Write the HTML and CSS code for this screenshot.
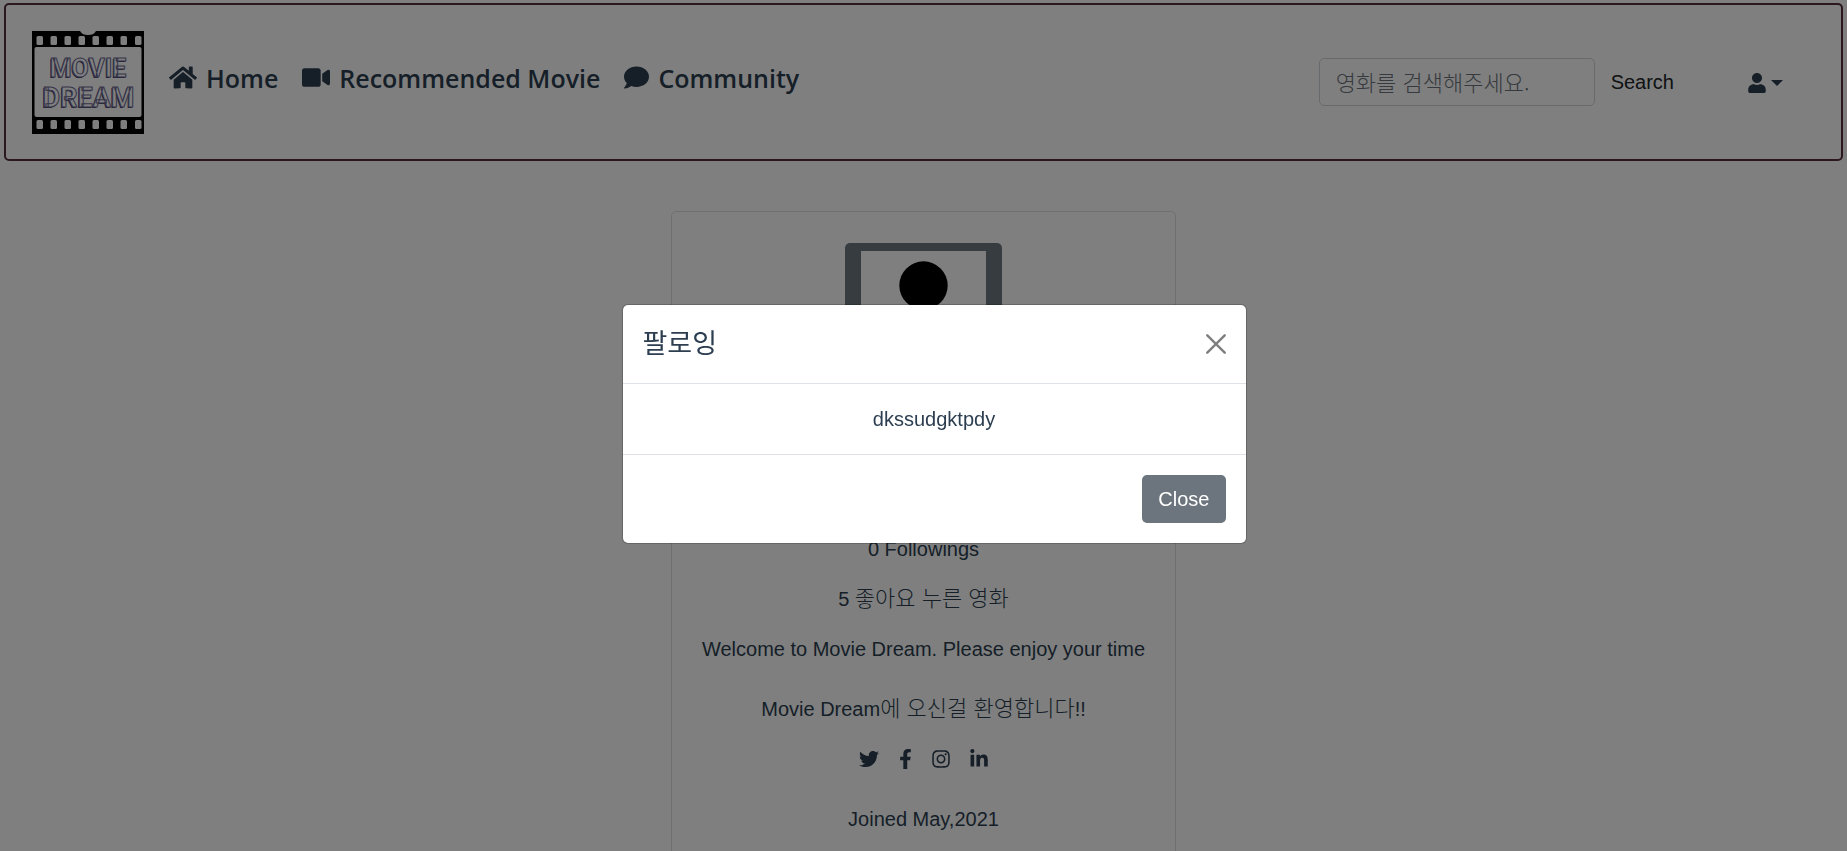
FILE: index.html
```html
<!DOCTYPE html>
<html lang="ko">
<head>
<meta charset="utf-8">
<meta name="viewport" content="width=device-width, initial-scale=1">
<title>Movie Dream</title>
<link rel="stylesheet" href="styles.css">
</head>
<body>
<header class="navbar">
  <a class="brand" href="#" aria-label="Movie Dream">
    <svg class="brand-logo" viewBox="0 0 112 103" aria-hidden="true">
      <path fill="#000" d="M0 0h48c2 3 4 4 8 4s6-1 8-4h48v103H0z"/>
      <rect x="2.500" y="16" width="107" height="70" rx="2" fill="#fff"/>
      <g fill="#fff">
        <rect x="4.500" y="5" width="6.500" height="9" rx="1.500"/><rect x="18.500" y="5" width="6.500" height="9" rx="1.500"/><rect x="32.500" y="5" width="6.500" height="9" rx="1.500"/><rect x="46.500" y="5" width="6.500" height="9" rx="1.500"/><rect x="60.500" y="5" width="6.500" height="9" rx="1.500"/><rect x="74.500" y="5" width="6.500" height="9" rx="1.500"/><rect x="88.500" y="5" width="6.500" height="9" rx="1.500"/><rect x="103" y="5" width="6.500" height="9" rx="1.500"/>
        <rect x="4.500" y="89" width="6.500" height="9" rx="1.500"/><rect x="18.500" y="89" width="6.500" height="9" rx="1.500"/><rect x="32.500" y="89" width="6.500" height="9" rx="1.500"/><rect x="46.500" y="89" width="6.500" height="9" rx="1.500"/><rect x="60.500" y="89" width="6.500" height="9" rx="1.500"/><rect x="74.500" y="89" width="6.500" height="9" rx="1.500"/><rect x="88.500" y="89" width="6.500" height="9" rx="1.500"/><rect x="103" y="89" width="6.500" height="9" rx="1.500"/>
      </g>
      <g class="logo-shadow"><text x="55" y="47" font-size="25">MOVIE</text><text x="55.500" y="76.500" font-size="27">DREAM</text></g>
      <g class="logo-face"><text x="56" y="46" font-size="25">MOVIE</text><text x="56.500" y="75.500" font-size="27">DREAM</text></g>
    </svg>
  </a>
  <nav class="nav">
    <a class="nav-link" href="#"><svg class="fa" width="28" height="25" viewBox="0 0 576 512" aria-hidden="true"><path d="M280.370 148.260L96 300.110V464a16 16 0 0 0 16 16l112.060-.290a16 16 0 0 0 15.920-16V368a16 16 0 0 1 16-16h64a16 16 0 0 1 16 16v95.640a16 16 0 0 0 16 16.050L464 480a16 16 0 0 0 16-16V300L295.670 148.260a12.190 12.190 0 0 0-15.300 0zM571.600 251.470L488 182.560V44.050a12 12 0 0 0-12-12h-56a12 12 0 0 0-12 12v72.610L318.470 43a48 48 0 0 0-61 0L4.340 251.470a12 12 0 0 0-1.600 16.900l25.500 31A12 12 0 0 0 45.150 301l235.220-193.740a12.190 12.190 0 0 1 15.300 0L530.900 301a12 12 0 0 0 16.900-1.600l25.500-31a12 12 0 0 0-1.700-16.930z"/></svg>Home</a>
    <a class="nav-link" href="#"><svg class="fa" width="28" height="25" viewBox="0 0 576 512" aria-hidden="true"><path d="M336.200 64H47.800C21.400 64 0 85.400 0 111.800v288.400C0 426.600 21.400 448 47.800 448h288.400c26.400 0 47.800-21.400 47.800-47.800V111.800c0-26.400-21.400-47.800-47.800-47.800zm189.400 37.700L416 177.300v157.400l109.600 75.500c21.200 14.600 50.400-.300 50.400-25.800V127.500c0-25.400-29.100-40.400-50.400-25.800z"/></svg>Recommended Movie</a>
    <a class="nav-link" href="#"><svg class="fa" width="25" height="25" viewBox="0 0 512 512" aria-hidden="true"><path d="M256 32C114.600 32 0 125.100 0 240c0 49.600 21.400 95 57 130.700C44.500 421.100 2.700 466 2.200 466.500c-2.200 2.300-2.800 5.700-1.500 8.700S4.800 480 8 480c66.300 0 116-31.800 140.600-51.400 32.700 12.300 69 19.400 107.400 19.400 141.400 0 256-93.100 256-208S397.400 32 256 32z"/></svg>Community</a>
  </nav>
  <form class="search">
    <input class="search-input" type="search" placeholder="영화를 검색해주세요." aria-label="영화 검색">
    <button class="search-button" type="button">Search</button>
  </form>
  <button class="user-menu" type="button" aria-label="User menu" aria-haspopup="true">
    <svg class="fa" width="18" height="20" viewBox="0 0 448 512" aria-hidden="true"><path d="M224 256c70.700 0 128-57.300 128-128S294.700 0 224 0 96 57.300 96 128s57.300 128 128 128zm89.600 32h-16.700c-22.200 10.200-46.900 16-72.900 16s-50.600-5.800-72.900-16h-16.700C60.200 288 0 348.200 0 422.400V464c0 26.500 21.500 48 48 48h352c26.500 0 48-21.500 48-48v-41.600c0-74.200-60.200-134.400-134.400-134.400z"/></svg>
    <span class="caret"></span>
  </button>
</header>

<main class="page">
  <section class="card">
    <svg class="avatar" viewBox="0 0 157 157" role="img" aria-label="Profile picture">
      <rect width="157" height="157" rx="5" fill="#6c7880"/>
      <rect x="16" y="8" width="125" height="141" fill="#fff"/>
      <circle cx="78.500" cy="42.500" r="24.200"/>
      <path d="M34 136c0-36 16-58 44.500-58S123 100 123 136z"/>
    </svg>
    <p class="stat">0 Followings</p>
    <p class="stat">5 <span class="ko">좋아요 누른 영화</span></p>
    <p class="welcome">Welcome to Movie Dream. Please enjoy your time</p>
    <p class="stat">Movie Dream<span class="ko">에 오신걸 환영합니다</span>!!</p>
    <div class="social">
      <a href="#" aria-label="Twitter"><svg class="fa" width="20" height="20" viewBox="0 0 512 512"><path d="M459.370 151.716c.325 4.548.325 9.097.325 13.645 0 138.720-105.583 298.558-298.558 298.558-59.452 0-114.680-17.219-161.137-47.106 8.447.974 16.568 1.299 25.340 1.299 49.055 0 94.213-16.568 130.274-44.832-46.132-.975-84.792-31.188-98.112-72.772 6.498.974 12.995 1.624 19.818 1.624 9.421 0 18.843-1.300 27.614-3.573-48.081-9.747-84.143-51.980-84.143-102.985v-1.299c13.969 7.797 30.214 12.670 47.431 13.319-28.264-18.843-46.781-51.005-46.781-87.391 0-19.492 5.197-37.360 14.294-52.954 51.655 63.675 129.300 105.258 216.365 109.807-1.624-7.797-2.599-15.918-2.599-24.040 0-57.828 46.782-104.934 104.934-104.934 30.213 0 57.502 12.670 76.670 33.137 23.715-4.548 46.456-13.320 66.599-25.340-7.798 24.366-24.366 44.833-46.132 57.827 21.117-2.273 41.584-8.122 60.426-16.243-14.292 20.791-32.161 39.308-52.628 54.253z"/></svg></a>
      <a href="#" aria-label="Facebook"><svg class="fa" width="13" height="20" viewBox="0 0 320 512"><path d="M279.140 288l14.220-92.660h-88.910v-60.130c0-25.350 12.420-50.060 52.240-50.060h40.420V6.260S260.430 0 225.360 0c-73.220 0-121.080 44.380-121.080 124.720v70.620H22.890V288h81.390v224h100.170V288z"/></svg></a>
      <a href="#" aria-label="Instagram"><svg class="fa" width="18" height="20" viewBox="0 0 448 512"><path d="M224.100 141c-63.600 0-114.900 51.300-114.900 114.900s51.300 114.900 114.900 114.900S339 319.500 339 255.900 287.700 141 224.100 141zm0 189.600c-41.100 0-74.700-33.500-74.700-74.700s33.500-74.700 74.700-74.700 74.700 33.500 74.700 74.700-33.600 74.700-74.700 74.700zm146.400-194.300c0 14.900-12 26.800-26.800 26.800-14.900 0-26.800-12-26.800-26.800s12-26.800 26.800-26.800 26.800 12 26.800 26.800zm76.100 27.200c-1.700-35.900-9.900-67.700-36.200-93.900-26.200-26.200-58-34.400-93.900-36.200-37-2.100-147.900-2.100-184.900 0-35.800 1.700-67.600 9.900-93.900 36.100s-34.400 58-36.200 93.900c-2.100 37-2.100 147.900 0 184.900 1.700 35.900 9.900 67.700 36.200 93.900s58 34.400 93.900 36.200c37 2.100 147.900 2.100 184.900 0 35.900-1.700 67.700-9.900 93.900-36.200 26.200-26.200 34.400-58 36.200-93.900 2.100-37 2.100-147.800 0-184.800zM398.800 388c-7.800 19.600-22.900 34.700-42.600 42.600-29.500 11.700-99.500 9-132.100 9s-102.700 2.600-132.100-9c-19.600-7.800-34.700-22.900-42.600-42.600-11.700-29.500-9-99.500-9-132.100s-2.600-102.700 9-132.100c7.800-19.600 22.900-34.700 42.600-42.600 29.500-11.700 99.500-9 132.100-9s102.700-2.600 132.100 9c19.600 7.800 34.700 22.900 42.600 42.600 11.700 29.500 9 99.500 9 132.100s2.700 102.700-9 132.100z"/></svg></a>
      <a href="#" aria-label="LinkedIn"><svg class="fa" width="18" height="20" viewBox="0 0 448 512"><path d="M100.280 448H7.400V148.900h92.880zM53.790 108.100C24.090 108.100 0 83.500 0 53.800a53.790 53.790 0 0 1 107.580 0c0 29.700-24.100 54.300-53.790 54.300zM447.900 448h-92.680V302.400c0-34.700-.700-79.200-48.290-79.200-48.290 0-55.690 37.700-55.690 76.700V448h-92.780V148.900h89.080v40.800h1.300c12.400-23.500 42.690-48.300 87.880-48.300 94 0 111.280 61.900 111.280 142.300V448z"/></svg></a>
    </div>
    <p class="joined">Joined May,2021</p>
  </section>
</main>

<div class="backdrop">
  <div class="modal" role="dialog" aria-modal="true" aria-labelledby="modal-title">
    <div class="modal-header">
      <h2 class="modal-title" id="modal-title">팔로잉</h2>
      <button class="modal-x" type="button" aria-label="Close dialog">
        <svg width="20" height="20" viewBox="0 0 20 20" aria-hidden="true"><path d="M1.300 1.300l17.400 17.400M18.700 1.300L1.300 18.700" fill="none" stroke="currentColor" stroke-width="2.400" stroke-linecap="round"/></svg>
      </button>
    </div>
    <div class="modal-body">dkssudgktpdy</div>
    <div class="modal-footer"><button class="close-button" type="button">Close</button></div>
  </div>
</div>
</body>
</html>
```
FILE: styles.css
```css
* { box-sizing: border-box; }

body {
  margin: 0;
  height: 100vh;
  overflow: hidden;
  background: #fff;
  color: #2c3e50;
  font-family: "Liberation Sans", Arial, "Noto Sans CJK KR", sans-serif;
  font-size: 20px;
  line-height: 30px;
}

a { color: inherit; text-decoration: none; }
button, input { font: inherit; }
.fa { display: block; fill: currentColor; flex: none; }
.ko {
  font-family: "Noto Sans CJK KR", sans-serif;
  font-size: 22px;
  font-weight: 300;
  line-height: 1;
}

.navbar {
  display: flex;
  align-items: center;
  margin: 3px 4px 0;
  padding: 26px 58px 25px 26px;
  border: 2px solid #54303a;
  border-radius: 5px;
}
.brand-logo { display: block; width: 112px; height: 103px; }
.logo-shadow, .logo-face {
  font-family: Roboto, sans-serif;
  font-weight: 700;
  text-anchor: middle;
}
.logo-shadow { fill: #34305e; }
.logo-face { fill: #fff; stroke: #6d6992; stroke-width: 1; }

.nav {
  display: flex;
  gap: 24px;
  margin: 0 auto 10px 25px;
  font-family: "Open Sans", sans-serif;
  font-size: 25px;
  font-weight: 600;
}
.nav-link { display: flex; align-items: center; gap: 9px; white-space: nowrap; }

.search { display: flex; align-items: center; margin-bottom: 2px; }
.search-input {
  width: 276px;
  height: 48px;
  padding: 0 16px 2px;
  border: 1px solid #ced4da;
  border-radius: 5px;
  background: #fff;
  font-family: "Noto Sans CJK KR", sans-serif;
  font-size: 22px;
  font-weight: 300;
}
.search-input::placeholder { color: #6c757d; opacity: 1; }
.search-button {
  padding: 0 16px;
  border: 0;
  background: none;
  color: #212529;
}
.user-menu {
  display: flex;
  align-items: center;
  gap: 5px;
  margin-left: 58px;
  padding: 0;
  border: 0;
  background: none;
  color: #2c3e50;
}
.caret {
  border: 6px solid transparent;
  border-top-color: currentColor;
  border-bottom: 0;
}

.page { display: flex; justify-content: center; padding-top: 50px; }
.card {
  display: flex;
  flex-direction: column;
  align-items: center;
  padding: 31px 30px;
  border: 1px solid #dfdfdf;
  border-radius: 5px;
  text-align: center;
}
.avatar { display: block; width: 157px; height: 157px; margin-bottom: 134px; }
.stat { margin: 0 0 20px; }
.welcome { margin: 0 0 30px; }
.social { display: flex; gap: 20px; height: 30px; align-items: center; margin-bottom: 30px; }
.joined { margin: 0; }

.backdrop {
  position: fixed;
  inset: 0;
  display: flex;
  align-items: center;
  justify-content: center;
  padding: 0 0 4px 21px;
  background: rgba(0, 0, 0, 0.5);
}
.modal {
  width: 100%;
  max-width: 625px;
  border: 1px solid rgba(0, 0, 0, 0.2);
  border-radius: 6px;
  background: #fff;
  background-clip: padding-box;
}
.modal-header {
  display: flex;
  align-items: center;
  justify-content: space-between;
  padding: 20px;
  border-bottom: 1px solid #dee2e6;
}
.modal-title {
  margin: 0;
  padding-bottom: 4px;
  font-family: "Noto Sans CJK KR", sans-serif;
  font-size: 27px;
  font-weight: 400;
  line-height: 34px;
}
.modal-x { padding: 0; border: 0; background: none; color: #7f7f7f; }
.modal-x svg { display: block; }
.modal-body { padding: 20px; text-align: center; }
.modal-footer {
  display: flex;
  justify-content: flex-end;
  padding: 20px;
  border-top: 1px solid #dee2e6;
}
.close-button {
  height: 48px;
  padding: 0 16px;
  border: 0;
  border-radius: 5px;
  background: #6c757d;
  color: #fff;
}
```
